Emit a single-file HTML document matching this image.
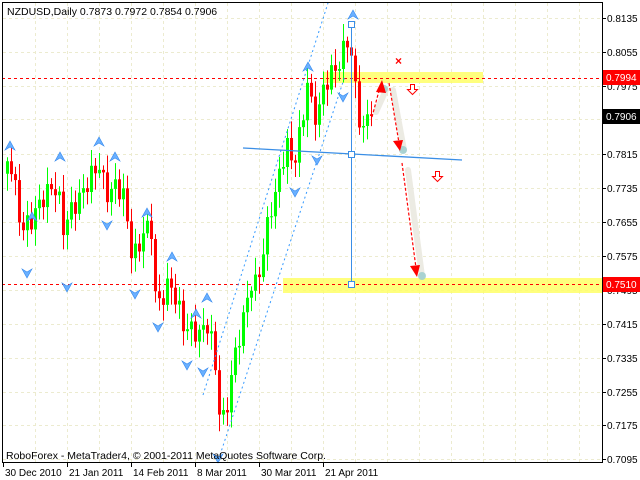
<!DOCTYPE html>
<html><head><meta charset="utf-8"><style>
html,body{margin:0;padding:0;background:#fff;}
svg{display:block;font-family:"Liberation Sans",sans-serif;}
</style></head><body>
<svg id="c" width="640" height="480" viewBox="0 0 640 480" xmlns="http://www.w3.org/2000/svg">
<rect width="640" height="480" fill="#fff"/>
<g id="grid" stroke="#ecebcf" stroke-width="1" stroke-dasharray="3,3"></g>
<rect x="283" y="278" width="319" height="15" fill="#ffff66" opacity="0.85"/>
<rect x="323" y="72" width="160" height="11" fill="#ffff66" opacity="0.85"/>
<line x1="2" y1="78.5" x2="602" y2="78.5" stroke="#ff0000" stroke-dasharray="3,3"/>
<line x1="2" y1="284.5" x2="602" y2="284.5" stroke="#ff0000" stroke-dasharray="3,3"/>
<g id="candles"></g>
<line x1="203" y1="395" x2="328" y2="3" stroke="#3399ff" stroke-dasharray="2,3"/>
<line x1="220" y1="455" x2="345" y2="76" stroke="#3399ff" stroke-dasharray="2,3"/>
<line x1="243" y1="148" x2="462" y2="160" stroke="#3a8ee6" stroke-width="1.3"/>
<line x1="351.5" y1="25" x2="351.5" y2="284" stroke="#3a8ee6"/>
<g fill="#fff" stroke="#3a8ee6"><rect x="348.5" y="21.5" width="6" height="6"/><rect x="348.5" y="151.5" width="6" height="6"/><rect x="348.5" y="281.5" width="6" height="6"/></g>
<g id="fr"></g>
<g stroke="#ebe9e0" stroke-width="6" stroke-linecap="round" opacity="0.9">
<line x1="376" y1="112" x2="386" y2="90"/><line x1="393" y1="90" x2="404" y2="150"/><line x1="408" y1="170" x2="422" y2="276"/></g>
<g fill="#9cc" opacity="0.8"><circle cx="384" cy="89" r="4"/><circle cx="403" cy="150" r="4"/><circle cx="422" cy="276" r="4"/></g>
<g stroke="#ff0000" stroke-dasharray="3,2" stroke-width="1.2">
<line x1="372" y1="117" x2="380" y2="87"/><line x1="389" y1="83" x2="399" y2="143"/><line x1="402" y1="163" x2="416" y2="268"/></g>
<g fill="#ff0000"><polygon points="382,80 376,92 386,93"/><polygon points="400,151 393,141 403,140"/><polygon points="417,277 410,266 420,265"/></g>
<text x="395" y="65" font-size="12" fill="#ff0000" font-weight="bold">×</text>
<g fill="#fff" stroke="#ff0000"><path d="M410.5,84.5h4v5h3l-5,5l-5,-5h3z"/><path d="M435.5,171.5h4v5h3l-5,5l-5,-5h3z"/></g>
<line x1="2.5" y1="2" x2="2.5" y2="462" stroke="#000"/>
<line x1="2" y1="2.5" x2="602" y2="2.5" stroke="#000"/>
<line x1="602.5" y1="2" x2="602.5" y2="463" stroke="#000"/>
<line x1="2" y1="462.5" x2="603" y2="462.5" stroke="#000"/>
<g id="ax" font-size="10" fill="#000"></g>
<rect x="603" y="70" width="37" height="15" fill="#ff0000"/><text x="606" y="81" font-size="10" fill="#fff">0.7994</text>
<rect x="603" y="109" width="37" height="15" fill="#000"/><text x="606" y="120" font-size="10" fill="#fff">0.7906</text>
<rect x="603" y="277" width="37" height="15" fill="#ff0000"/><text x="606" y="288" font-size="10" fill="#fff">0.7510</text>
<text x="7" y="15" font-size="10.5" fill="#000">NZDUSD,Daily  0.7873 0.7972 0.7854 0.7906</text>
<text x="6" y="459" font-size="10.5" fill="#000">RoboForex - MetaTrader4, © 2001-2011 MetaQuotes Software Corp.</text>
</svg>
<script>
(function(){
var NS="http://www.w3.org/2000/svg";
function el(p,t,a){var e=document.createElementNS(NS,t);for(var k in a)e.setAttribute(k,a[k]);p.appendChild(e);return e;}
var g=document.getElementById('grid'),ax=document.getElementById('ax');
var pr=[["0.8135",18],["0.8055",52],["0.7975",86],["0.7895",119],["0.7815",154],["0.7735",188],["0.7655",222],["0.7575",256],["0.7495",290],["0.7415",324],["0.7335",358],["0.7255",392],["0.7175",425],["0.7095",459]];
pr.forEach(function(p){el(g,'line',{x1:3,x2:602,y1:p[1]+.5,y2:p[1]+.5});el(ax,'line',{x1:602,x2:606,y1:p[1]+.5,y2:p[1]+.5,stroke:'#000'});var t=el(ax,'text',{x:607,y:p[1]+4});t.textContent=p[0];});
for(var x=35;x<602;x+=32){el(g,'line',{x1:x+.5,x2:x+.5,y1:3,y2:462});}
var d=["30 Dec 2010","21 Jan 2011","14 Feb 2011","8 Mar 2011","30 Mar 2011","21 Apr 2011"];
d.forEach(function(s,i){var x=3+64*i;el(ax,'line',{x1:x+.5,x2:x+.5,y1:462,y2:467,stroke:'#000'});var t=el(ax,'text',{x:x+2,y:476});t.textContent=s;});
var kp=[[0,180],[8,155],[14,190],[20,230],[30,220],[40,200],[52,185],[57,195],[62,228],[70,210],[80,195],[90,175],[98,165],[105,195],[115,185],[122,195],[130,250],[136,255],[142,230],[150,230],[155,310],[162,295],[168,282],[175,300],[182,325],[190,330],[200,335],[205,320],[210,340],[215,375],[219,420],[224,420],[230,375],[236,345],[242,318],[250,282],[256,285],[262,250],[268,215],[275,190],[281,160],[286,145],[291,165],[296,148],[302,115],[306,80],[311,112],[316,118],[321,92],[328,75],[336,68],[343,48],[348,36],[353,82],[357,112],[361,135],[365,118],[371,116]];
function yAt(x){for(var i=1;i<kp.length;i++){if(x<=kp[i][0]){var a=kp[i-1],b=kp[i];return a[1]+(b[1]-a[1])*(x-a[0])/(b[0]-a[0]);}}return kp[kp.length-1][1];}
var cg=document.getElementById('candles');var prev=yAt(2);
for(var i=0;i<92;i++){var x=6+4*i;var c=yAt(x)+Math.sin(i*2.3)*10;if(i==91)c=116;var o=prev;var bt=Math.min(o,c),bb=Math.max(o,c);if(bb-bt<1)bb=bt+1;
var col=c<o?'#00ff00':'#ff0000';var hi=bt-4-Math.abs(Math.sin(i*1.7))*13,lo=bb+4+Math.abs(Math.cos(i*1.3))*13;
el(cg,'line',{x1:x+1.5,x2:x+1.5,y1:hi,y2:lo,stroke:col});el(cg,'rect',{x:x,y:bt,width:3,height:bb-bt,fill:col});prev=c;}
var fr=document.getElementById('fr');
var up=[[10,146],[32,217],[60,157],[99,142],[115,157],[147,213],[172,257],[196,314],[207,298],[308,67],[353,15]];
var dn=[[27,273],[67,287],[107,225],[135,294],[158,327],[187,365],[203,372],[218,458],[295,192],[317,160],[343,97]];
up.forEach(function(p){el(fr,'path',{d:'M'+(p[0]-5)+','+(p[1]+4)+'L'+p[0]+','+(p[1]-5)+'L'+(p[0]+5)+','+(p[1]+4)+'L'+p[0]+','+(p[1]+1)+'Z',fill:'#6ab0ff',stroke:'#3388ee','stroke-width':0.6});});
dn.forEach(function(p){el(fr,'path',{d:'M'+(p[0]-5)+','+(p[1]-4)+'L'+p[0]+','+(p[1]+5)+'L'+(p[0]+5)+','+(p[1]-4)+'L'+p[0]+','+(p[1]-1)+'Z',fill:'#6ab0ff',stroke:'#3388ee','stroke-width':0.6});});
})();
</script>
</body></html>
